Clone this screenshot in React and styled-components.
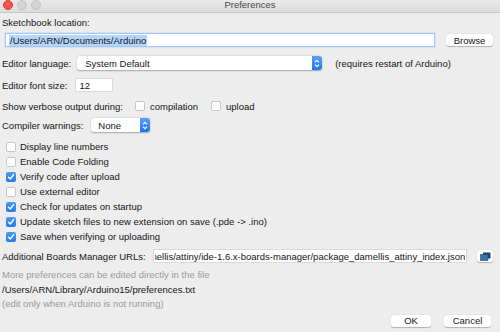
import styled, { createGlobalStyle } from "styled-components";

const GlobalStyle = createGlobalStyle`
  html, body {
    margin: 0;
    padding: 0;
    background: #ededed;
  }
  body {
    font-family: "Liberation Sans", Arial, sans-serif;
    font-size: 9.5px;
    color: #161616;
  }
`;

const Window = styled.div`
  width: 500px;
  height: 332px;
  overflow: hidden;
  background: #ededed;
  display: flex;
  flex-direction: column;
`;

const TitleBar = styled.div`
  height: 12px;
  flex: none;
  display: flex;
  align-items: center;
  position: relative;
  background: linear-gradient(#e9e9e9, #dcdcdc);
  border-bottom: 1px solid #c8c8c8;
`;

const Lights = styled.div`
  display: flex;
  gap: 4px;
  padding-left: 3px;
  margin-top: -2px;
`;

const Light = styled.span`
  width: 8px;
  height: 8px;
  border-radius: 50%;
  background: ${(p) => (p.red ? "#f4534b" : "#d3d3d3")};
  border: 0.5px solid ${(p) => (p.red ? "#dc3b34" : "#c4c4c4")};
`;

const Title = styled.div`
  position: absolute;
  left: 0;
  right: 0;
  top: -1px;
  text-align: center;
  color: #4a4a4a;
  font-size: 9.5px;
`;

const Body = styled.div`
  flex: 1;
  display: flex;
  flex-direction: column;
  padding: 0 7px 0 2px;
`;

const Row = styled.div`
  display: flex;
  align-items: center;
  height: ${(p) => p.h || 16}px;
  margin-top: ${(p) => p.mt || 0}px;
  flex: none;
  white-space: nowrap;
`;

const Label = styled.span`
  color: ${(p) => (p.muted ? "#9b9b9b" : "#161616")};
  margin-left: ${(p) => p.ml || 0}px;
`;

const TextField = styled.div`
  height: 12px;
  width: ${(p) => p.w}px;
  margin-left: ${(p) => p.ml || 0}px;
  background: #fff;
  border: 1px solid ${(p) => (p.focus ? "#a6c6ee" : "#dadada")};
  box-shadow: ${(p) => (p.focus ? "0 0 0 1px #d3e3f8" : "none")};
  display: flex;
  align-items: center;
  padding: 0 ${(p) => (p.tight ? 1 : 3)}px;
  overflow: hidden;
  box-sizing: content-box;
`;

const UrlInput = styled.input`
  border: none;
  outline: none;
  background: transparent;
  padding: 0;
  margin: 0;
  width: 100%;
  height: 12px;
  font: inherit;
  color: #161616;
`;

const Selected = styled.span`
  background: #b3d6fd;
  padding: 0 1px;
  line-height: 11px;
`;

const Button = styled.div`
  height: 12px;
  width: ${(p) => p.w}px;
  margin-left: ${(p) => p.ml || 0}px;
  background: #fff;
  border-radius: 3px;
  box-shadow: 0 0.5px 1px rgba(0, 0, 0, 0.25);
  display: flex;
  align-items: center;
  justify-content: center;
  color: #161616;
`;

const Select = styled.div`
  height: 14px;
  width: ${(p) => p.w}px;
  margin-left: ${(p) => p.ml || 0}px;
  background: #fff;
  border-radius: 3px;
  box-shadow: 0 0.5px 1.5px rgba(0, 0, 0, 0.3);
  display: flex;
  align-items: center;
  overflow: hidden;
`;

const SelectText = styled.span`
  flex: 1;
  padding-left: ${(p) => p.pl || 8}px;
`;

const SelectArrow = styled.div`
  width: 10px;
  height: 14px;
  background: linear-gradient(#5aa2fb, #1f75f2);
  display: flex;
  align-items: center;
  justify-content: center;
`;

const Box = styled.span`
  width: 10px;
  height: 10px;
  box-sizing: border-box;
  border-radius: 2px;
  margin: ${(p) => p.m || "0 4px 0 4px"};
  background: ${(p) => (p.checked ? "linear-gradient(#4d9af8, #2678f0)" : "#fff")};
  border: ${(p) => (p.checked ? "none" : "1px solid #c6c6c6")};
  display: inline-flex;
  align-items: center;
  justify-content: center;
  flex: none;
`;

const Footer = styled.div`
  display: flex;
  justify-content: flex-end;
  align-items: center;
  height: 13px;
  margin-top: 4px;
  padding-right: 2px;
`;

const Arrows = () => (
  <svg width="6" height="9" viewBox="0 0 6 9">
    <path d="M1 3.3 L3 1.3 L5 3.3 M1 5.7 L3 7.7 L5 5.7" stroke="#fff" strokeWidth="1.1" fill="none" />
  </svg>
);

const Check = () => (
  <svg width="8" height="8" viewBox="0 0 8 8">
    <path d="M1.5 4.2 L3.3 6 L6.6 1.6" stroke="#fff" strokeWidth="1.4" fill="none" strokeLinecap="round" strokeLinejoin="round" />
  </svg>
);

const Checkbox = ({ checked, m }) => (
  <Box checked={checked} m={m}>
    {checked && <Check />}
  </Box>
);

const WindowsIcon = () => (
  <svg width="11" height="9" viewBox="0 0 11 9">
    <rect x="3" y="0.5" width="7.5" height="6" fill="#26436b" />
    <rect x="0.5" y="2.5" width="7.5" height="6" fill="#3d6fb5" stroke="#26436b" strokeWidth="0.6" />
  </svg>
);

const options = [
  ["Display line numbers", false],
  ["Enable Code Folding", false],
  ["Verify code after upload", true],
  ["Use external editor", false],
  ["Check for updates on startup", true],
  ["Update sketch files to new extension on save (.pde -> .ino)", true],
  ["Save when verifying or uploading", true],
];

const boardsUrl =
  "https://raw.githubusercontent.com/damellis/attiny/ide-1.6.x-boards-manager/package_damellis_attiny_index.json";

export default function App() {
  // scroll the url field to its end, as the dialog shows it
  const scrollToEnd = (el) => {
    if (el) el.scrollLeft = el.scrollWidth;
  };

  return (
    <>
      <GlobalStyle />
      <Window>
        <TitleBar>
          <Lights>
            <Light red />
            <Light />
            <Light />
          </Lights>
          <Title>Preferences</Title>
        </TitleBar>
        <Body>
          <Row h={14} mt={2}>
            <Label>Sketchbook location:</Label>
          </Row>
          <Row mt={3}>
            <TextField w={422} ml={3} focus>
              <Selected>/Users/ARN/Documents/Arduino</Selected>
            </TextField>
            <Button w={47} ml={11}>Browse</Button>
          </Row>
          <Row mt={7}>
            <Label>Editor language:</Label>
            <Select w={245} ml={6}>
              <SelectText>System Default</SelectText>
              <SelectArrow>
                <Arrows />
              </SelectArrow>
            </Select>
            <Label ml={13}>(requires restart of Arduino)</Label>
          </Row>
          <Row mt={6}>
            <Label>Editor font size:</Label>
            <TextField w={30} ml={8}>12</TextField>
          </Row>
          <Row mt={5}>
            <Label>Show verbose output during:</Label>
            <Checkbox m="0 5px 0 12px" />
            <Label>compilation</Label>
            <Checkbox m="0 5px 0 13px" />
            <Label>upload</Label>
          </Row>
          <Row mt={3}>
            <Label>Compiler warnings:</Label>
            <Select w={59} ml={8}>
              <SelectText pl={7}>None</SelectText>
              <SelectArrow>
                <Arrows />
              </SelectArrow>
            </Select>
          </Row>
          <Row h={6} />
          {options.map(([text, checked]) => (
            <Row h={15} key={text}>
              <Checkbox checked={checked} />
              <Label>{text}</Label>
            </Row>
          ))}
          <Row mt={4}>
            <Label>Additional Boards Manager URLs:</Label>
            <TextField w={320} ml={7} tight>
              <UrlInput readOnly value={boardsUrl} ref={scrollToEnd} />
            </TextField>
            <Button w={16} ml={10}>
              <WindowsIcon />
            </Button>
          </Row>
          <Row h={14} mt={3}>
            <Label muted>More preferences can be edited directly in the file</Label>
          </Row>
          <Row h={14} mt={1}>
            <Label>/Users/ARN/Library/Arduino15/preferences.txt</Label>
          </Row>
          <Row h={14}>
            <Label muted>(edit only when Arduino is not running)</Label>
          </Row>
          <Footer>
            <Button w={40}>OK</Button>
            <Button w={47} ml={13}>Cancel</Button>
          </Footer>
        </Body>
      </Window>
    </>
  );
}
